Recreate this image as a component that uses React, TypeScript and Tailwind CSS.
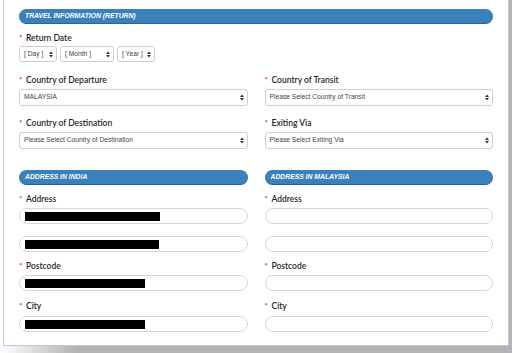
import React from 'react';

const SelectArrows: React.FC = () => (
  <svg width="4" height="7" viewBox="0 0 4 7" className="shrink-0">
    <path d="M0 3 L2 0.5 L4 3 Z" fill="#333" />
    <path d="M0 4 L2 6.5 L4 4 Z" fill="#333" />
  </svg>
);

const Label: React.FC<{ text: string; className?: string }> = ({ text, className = '' }) => (
  <div className={`flex items-center h-[10px] leading-[10px] text-[8.5px] text-[#1f1f1f] font-['Lato',sans-serif] font-semibold ${className}`}>
    <span className="text-[#e0262b] w-[7px] text-[8px]">*</span>
    <span>{text}</span>
  </div>
);

const FakeSelect: React.FC<{ text: string; className?: string }> = ({ text, className = '' }) => (
  <div className={`flex items-center justify-between h-[17px] bg-white border border-[#cfcfcf] rounded-[3px] pl-[4px] pr-[3px] text-[6.7px] text-[#444] font-['Liberation_Sans',Arial,sans-serif] ${className}`}>
    <span>{text}</span>
    <SelectArrows />
  </div>
);

const FakeInput: React.FC<{ redact?: number; className?: string }> = ({ redact, className = '' }) => (
  <div className={`flex items-center h-[16px] bg-white border border-[#d6d6d6] rounded-full pl-[5px] ${className}`}>
    {redact ? <div className="h-[9px] bg-black" style={{ width: redact }} /> : null}
  </div>
);

const Header: React.FC<{ text: string }> = ({ text }) => (
  <div className="flex items-center h-[15px] rounded-full bg-[#3a80ba] border-b border-[#24659b] pl-[6px] text-white text-[6.8px] font-bold italic font-['Liberation_Sans',Arial,sans-serif]">
    {text}
  </div>
);

export default function App() {
  return (
    <div className="w-[512px] h-[353px] bg-white flex flex-col overflow-hidden">
      <div className="flex h-[346px]">
        <div className="w-[3px] bg-white" />
        <div className="w-[506px] bg-white border-l border-r border-b border-[#b7c9e2] pl-[15px] pr-[15px] pt-[9px]">
          <Header text="TRAVEL INFORMATION (RETURN)" />

          <Label text="Return Date" className="mt-[9px]" />
          <div className="flex gap-[3px] mt-[3px]">
            <FakeSelect text="[ Day ]" className="w-[38px] !h-[16px]" />
            <FakeSelect text="[ Month ]" className="w-[54px] !h-[16px]" />
            <FakeSelect text="[ Year ]" className="w-[38px] !h-[16px]" />
          </div>

          <div className="grid grid-cols-2 gap-x-[17px]">
            <div>
              <Label text="Country of Departure" className="mt-[13px]" />
              <FakeSelect text="MALAYSIA" className="mt-[4px]" />
              <Label text="Country of Destination" className="mt-[12px]" />
              <FakeSelect text="Please Select Country of Destination" className="mt-[4px]" />
            </div>
            <div>
              <Label text="Country of Transit" className="mt-[13px]" />
              <FakeSelect text="Please Select Country of Transit" className="mt-[4px]" />
              <Label text="Exiting Via" className="mt-[12px]" />
              <FakeSelect text="Please Select Exiting Via" className="mt-[4px]" />
            </div>
          </div>

          <div className="grid grid-cols-2 gap-x-[17px] mt-[21px]">
            <div>
              <Header text="ADDRESS IN INDIA" />
              <Label text="Address" className="mt-[9px]" />
              <FakeInput redact={135} className="mt-[4px]" />
              <FakeInput redact={134} className="mt-[12px]" />
              <Label text="Postcode" className="mt-[9px]" />
              <FakeInput redact={120} className="mt-[4px]" />
              <Label text="City" className="mt-[10px]" />
              <FakeInput redact={120} className="mt-[5px]" />
            </div>
            <div>
              <Header text="ADDRESS IN MALAYSIA" />
              <Label text="Address" className="mt-[9px]" />
              <FakeInput className="mt-[4px]" />
              <FakeInput className="mt-[12px]" />
              <Label text="Postcode" className="mt-[9px]" />
              <FakeInput className="mt-[4px]" />
              <Label text="City" className="mt-[10px]" />
              <FakeInput className="mt-[5px]" />
            </div>
          </div>
        </div>
        <div className="flex-1 bg-[#b3b3b3]" />
      </div>
      <div className="flex-1 bg-gradient-to-r from-white via-[#b3b3b3] via-[15%] to-[#b3b3b3]" />
    </div>
  );
}
